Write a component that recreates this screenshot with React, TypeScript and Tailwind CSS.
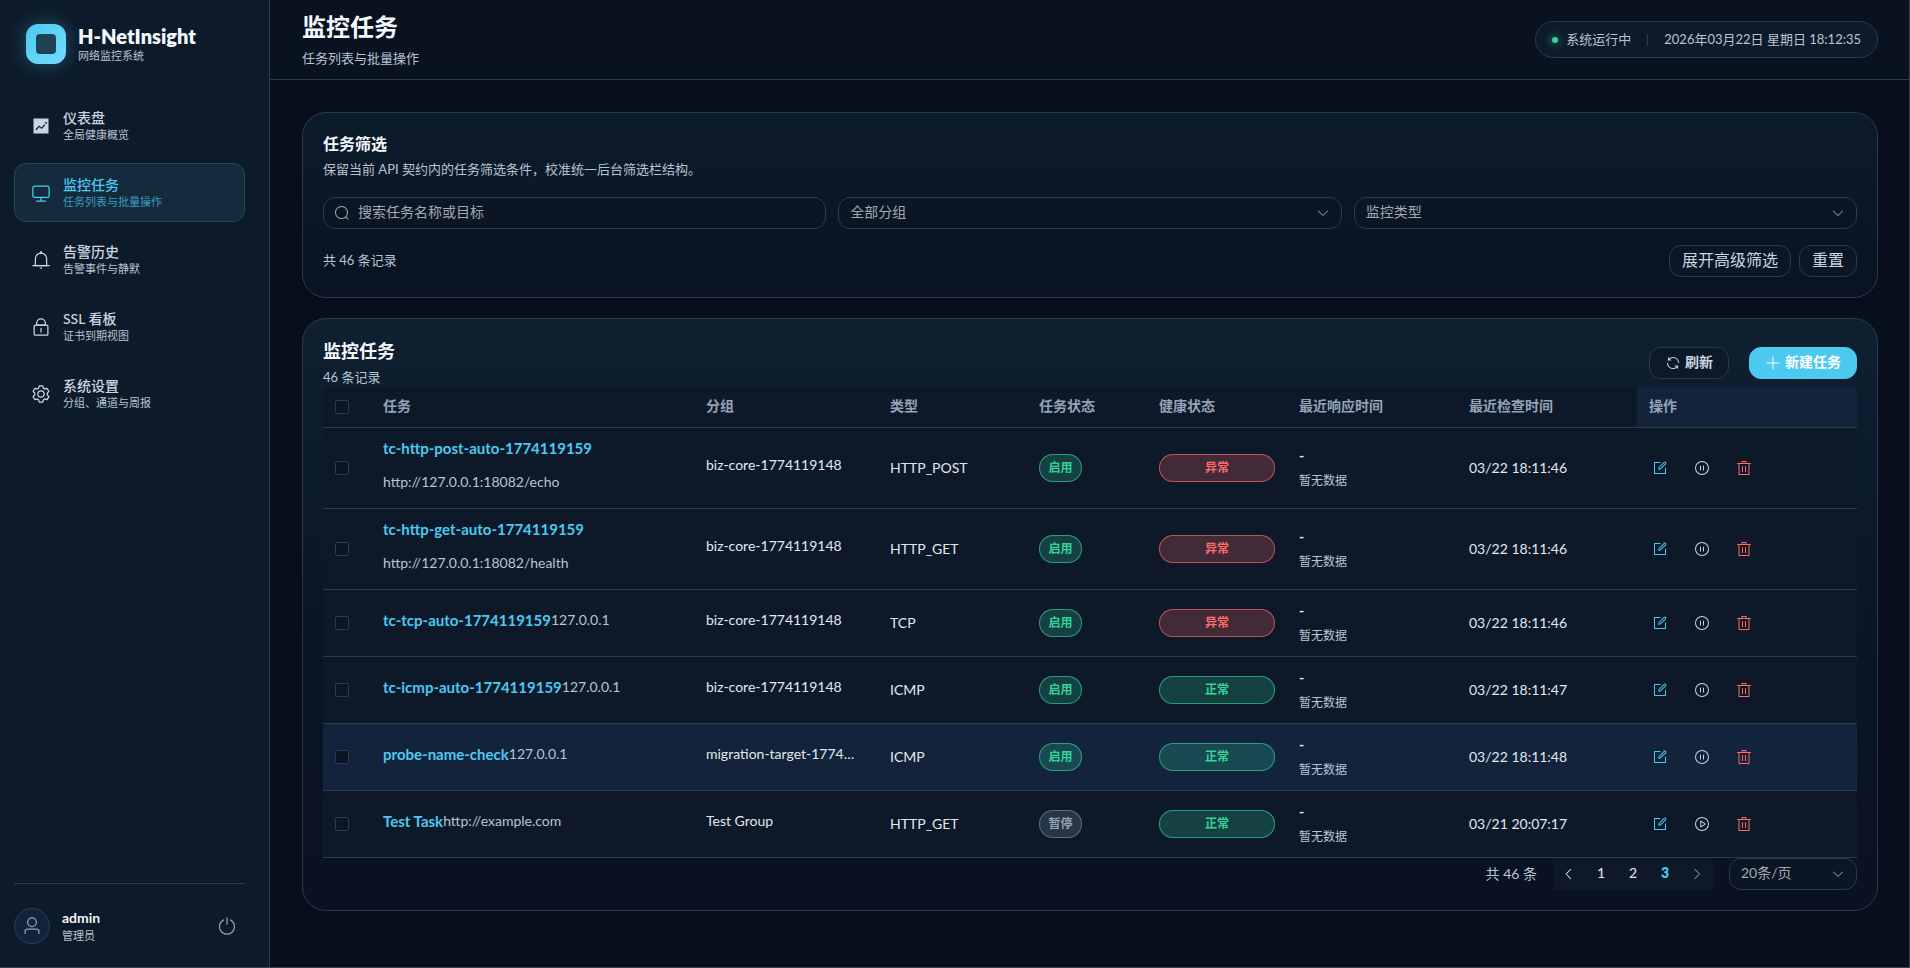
import { useState } from "react";
import type { ReactNode } from "react";
import clsx from "clsx";

const icons = {
  trend: [
    "M128 896V128h768v768zm291.712-327.296 128 102.4 180.16-201.792-47.744-42.624-139.84 156.608-128-102.4-180.16 201.792 47.744 42.624zM816 352a48 48 0 1 0-96 0 48 48 0 0 0 96 0",
  ],
  monitor: [
    "M544 768v128h192a32 32 0 1 1 0 64H288a32 32 0 1 1 0-64h192V768H192A128 128 0 0 1 64 640V256a128 128 0 0 1 128-128h640a128 128 0 0 1 128 128v384a128 128 0 0 1-128 128zM192 192a64 64 0 0 0-64 64v384a64 64 0 0 0 64 64h640a64 64 0 0 0 64-64V256a64 64 0 0 0-64-64z",
  ],
  bell: [
    "M512 64a64 64 0 0 1 64 64v64H448v-64a64 64 0 0 1 64-64",
    "M256 768h512V448a256 256 0 1 0-512 0zm256-640a320 320 0 0 1 320 320v384H192V448a320 320 0 0 1 320-320",
    "M96 768h832q32 0 32 32t-32 32H96q-32 0-32-32t32-32m352 128h128a64 64 0 0 1-128 0",
  ],
  lock: [
    "M224 448a32 32 0 0 0-32 32v384a32 32 0 0 0 32 32h576a32 32 0 0 0 32-32V480a32 32 0 0 0-32-32zm0-64h576a96 96 0 0 1 96 96v384a96 96 0 0 1-96 96H224a96 96 0 0 1-96-96V480a96 96 0 0 1 96-96",
    "M512 544a32 32 0 0 1 32 32v192a32 32 0 1 1-64 0V576a32 32 0 0 1 32-32m192-160v-64a192 192 0 1 0-384 0v64zM512 64a256 256 0 0 1 256 256v128H256V320A256 256 0 0 1 512 64",
  ],
  setting: [
    "M600.704 64a32 32 0 0 1 30.464 22.208l35.2 109.376c14.784 7.232 28.928 15.36 42.432 24.512l112.384-24.192a32 32 0 0 1 34.432 15.36L944.32 364.8a32 32 0 0 1-4.032 37.504l-77.12 85.12a357.12 357.12 0 0 1 0 49.024l77.12 85.248a32 32 0 0 1 4.032 37.504l-88.704 153.6a32 32 0 0 1-34.432 15.296L708.8 803.904c-13.44 9.088-27.648 17.28-42.368 24.512l-35.264 109.376A32 32 0 0 1 600.704 960H423.296a32 32 0 0 1-30.464-22.208L357.696 828.48a351.616 351.616 0 0 1-42.56-24.64l-112.32 24.256a32 32 0 0 1-34.432-15.36L79.68 659.2a32 32 0 0 1 4.032-37.504l77.12-85.248a357.12 357.12 0 0 1 0-48.896l-77.12-85.248A32 32 0 0 1 79.68 364.8l88.704-153.6a32 32 0 0 1 34.432-15.296l112.32 24.256c13.568-9.152 27.776-17.408 42.56-24.64l35.2-109.312A32 32 0 0 1 423.232 64H600.64zm-23.424 64H446.72l-36.352 113.088-24.512 11.968a294.113 294.113 0 0 0-34.816 20.096l-22.656 15.36-116.224-25.088-65.28 113.152 79.68 88.192-1.92 27.136a293.12 293.12 0 0 0 0 40.192l1.92 27.136-79.808 88.192 65.344 113.152 116.224-25.024 22.656 15.296a294.113 294.113 0 0 0 34.816 20.096l24.512 11.968L446.72 896h130.688l36.48-113.152 24.448-11.904a288.282 288.282 0 0 0 34.752-20.096l22.592-15.296 116.288 25.024 65.28-113.152-79.744-88.192 1.92-27.136a293.12 293.12 0 0 0 0-40.256l-1.92-27.136 79.808-88.128-65.344-113.152-116.288 24.96-22.592-15.232a287.616 287.616 0 0 0-34.752-20.096l-24.448-11.904L577.344 128zM512 320a192 192 0 1 1 0 384 192 192 0 0 1 0-384m0 64a128 128 0 1 0 0 256 128 128 0 0 0 0-256",
  ],
  user: [
    "M512 512a192 192 0 1 0 0-384 192 192 0 0 0 0 384m0 64a256 256 0 1 1 0-512 256 256 0 0 1 0 512m320 320v-96a96 96 0 0 0-96-96H288a96 96 0 0 0-96 96v96a32 32 0 1 1-64 0v-96a160 160 0 0 1 160-160h448a160 160 0 0 1 160 160v96a32 32 0 1 1-64 0",
  ],
  power: [
    "M352 159.872V230.4a352 352 0 1 0 320 0v-70.528A416.128 416.128 0 0 1 512 960a416 416 0 0 1-160-800.128z",
    "M512 64q32 0 32 32v320q0 32-32 32t-32-32V96q0-32 32-32",
  ],
  search: [
    "m795.904 750.72 124.992 124.928a32 32 0 0 1-45.248 45.248L750.656 795.904a416 416 0 1 1 45.248-45.248zM480 832a352 352 0 1 0 0-704 352 352 0 0 0 0 704",
  ],
  down: [
    "M831.872 340.864 512 652.672 192.128 340.864a30.592 30.592 0 0 0-42.752 0 29.12 29.12 0 0 0 0 41.6L489.664 714.24a32 32 0 0 0 44.672 0l340.288-331.712a29.12 29.12 0 0 0 0-41.728 30.592 30.592 0 0 0-42.752 0z",
  ],
  left: [
    "M609.408 149.376 277.76 489.6a32 32 0 0 0 0 44.672l331.648 340.352a29.12 29.12 0 0 0 41.728 0 30.592 30.592 0 0 0 0-42.752L339.264 511.936l311.872-319.872a30.592 30.592 0 0 0 0-42.688 29.12 29.12 0 0 0-41.728 0z",
  ],
  right: [
    "M340.864 149.312a30.592 30.592 0 0 0 0 42.752L652.736 512 340.864 831.872a30.592 30.592 0 0 0 0 42.752 29.12 29.12 0 0 0 41.728 0L714.24 534.336a32 32 0 0 0 0-44.672L382.592 149.376a29.12 29.12 0 0 0-41.728 0z",
  ],
  refresh: [
    "M771.776 794.88A384 384 0 0 1 128 512h64a320 320 0 0 0 555.712 216.448H654.72a32 32 0 1 1 0-64h149.056a32 32 0 0 1 32 32v148.928a32 32 0 1 1-64 0v-50.56zM276.288 295.616h92.992a32 32 0 0 1 0 64H220.16a32 32 0 0 1-32-32V178.56a32 32 0 0 1 64 0v50.56A384 384 0 0 1 896.128 512h-64a320 320 0 0 0-555.776-216.384z",
  ],
  plus: [
    "M480 480V128a32 32 0 0 1 64 0v352h352a32 32 0 1 1 0 64H544v352a32 32 0 1 1-64 0V544H128a32 32 0 0 1 0-64z",
  ],
  edit: [
    "M832 512a32 32 0 1 1 64 0v352a32 32 0 0 1-32 32H160a32 32 0 0 1-32-32V160a32 32 0 0 1 32-32h352a32 32 0 0 1 0 64H192v640h640z",
    "m469.952 554.24 52.8-7.552L847.104 222.4a32 32 0 1 0-45.248-45.248L477.44 501.44l-7.552 52.8zm422.4-422.4a96 96 0 0 1 0 135.808l-331.84 331.84a32 32 0 0 1-18.112 9.088L436.8 623.68a32 32 0 0 1-36.224-36.224l15.104-105.6a32 32 0 0 1 9.024-18.112l331.904-331.84a96 96 0 0 1 135.744 0z",
  ],
  pause: [
    "M512 64a448 448 0 1 1 0 896 448 448 0 0 1 0-896m0 832a384 384 0 0 0 0-768 384 384 0 0 0 0 768m-96-544q32 0 32 32v256q0 32-32 32t-32-32V384q0-32 32-32m192 0q32 0 32 32v256q0 32-32 32t-32-32V384q0-32 32-32",
  ],
  play: [
    "M512 64a448 448 0 1 1 0 896 448 448 0 0 1 0-896m0 832a384 384 0 0 0 0-768 384 384 0 0 0 0 768m-48-247.616L668.608 512 464 375.616zm10.624-342.656 249.472 166.336a48 48 0 0 1 0 79.872L474.624 718.272A48 48 0 0 1 400 678.336V345.6a48 48 0 0 1 74.624-39.936z",
  ],
  trash: [
    "M160 256H96a32 32 0 0 1 0-64h256V95.936a32 32 0 0 1 32-32h256a32 32 0 0 1 32 32V192h256a32 32 0 1 1 0 64h-64v672a32 32 0 0 1-32 32H192a32 32 0 0 1-32-32zm448-64v-64H416v64zM224 896h576V256H224zm192-128a32 32 0 0 1-32-32V416a32 32 0 0 1 64 0v320a32 32 0 0 1-32 32m192 0a32 32 0 0 1-32-32V416a32 32 0 0 1 64 0v320a32 32 0 0 1-32 32",
  ],
};

type IconName = keyof typeof icons;

function Icon({ name, className }: { name: IconName; className?: string }) {
  return (
    <svg
      xmlns="http://www.w3.org/2000/svg"
      viewBox="0 0 1024 1024"
      fill="currentColor"
      className={clsx("shrink-0", className)}
      aria-hidden="true"
    >
      {icons[name].map((d) => (
        <path key={d} d={d} />
      ))}
    </svg>
  );
}

const navItems: { icon: IconName; label: string; desc: string; href: string }[] = [
  { icon: "trend", label: "仪表盘", desc: "全局健康概览", href: "#dashboard" },
  { icon: "monitor", label: "监控任务", desc: "任务列表与批量操作", href: "#tasks" },
  { icon: "bell", label: "告警历史", desc: "告警事件与静默", href: "#alerts" },
  { icon: "lock", label: "SSL 看板", desc: "证书到期视图", href: "#ssl" },
  { icon: "setting", label: "系统设置", desc: "分组、通道与周报", href: "#settings" },
];

const tasks = [
  {
    name: "tc-http-post-auto-1774119159",
    target: "http://127.0.0.1:18082/echo",
    group: "biz-core-1774119148",
    type: "HTTP_POST",
    enabled: true,
    healthy: false,
    checkedAt: "03/22 18:11:46",
  },
  {
    name: "tc-http-get-auto-1774119159",
    target: "http://127.0.0.1:18082/health",
    group: "biz-core-1774119148",
    type: "HTTP_GET",
    enabled: true,
    healthy: false,
    checkedAt: "03/22 18:11:46",
  },
  {
    name: "tc-tcp-auto-1774119159",
    target: "127.0.0.1",
    group: "biz-core-1774119148",
    type: "TCP",
    enabled: true,
    healthy: false,
    checkedAt: "03/22 18:11:46",
  },
  {
    name: "tc-icmp-auto-1774119159",
    target: "127.0.0.1",
    group: "biz-core-1774119148",
    type: "ICMP",
    enabled: true,
    healthy: true,
    checkedAt: "03/22 18:11:47",
  },
  {
    name: "probe-name-check",
    target: "127.0.0.1",
    group: "migration-target-1774…",
    type: "ICMP",
    enabled: true,
    healthy: true,
    checkedAt: "03/22 18:11:48",
    highlighted: true,
  },
  {
    name: "Test Task",
    target: "http://example.com",
    group: "Test Group",
    type: "HTTP_GET",
    enabled: false,
    healthy: true,
    checkedAt: "03/21 20:07:17",
  },
];

const columns = ["任务", "分组", "类型", "任务状态", "健康状态", "最近响应时间", "最近检查时间"];

function Sidebar() {
  return (
    <aside className="flex w-[270px] shrink-0 flex-col border-r border-[#2a3a4f] bg-[#0d1a29] pr-6 pl-3.5">
      <div className="flex items-center gap-3 px-3 pt-6">
        <div className="flex size-10 items-center justify-center rounded-xl bg-linear-to-br from-[#4cc9f0] to-[#72dcff] shadow-[0_0_20px_rgba(76,201,240,0.35)]">
          <div className="size-5 rounded bg-[#1d4355]" />
        </div>
        <div>
          <div className="text-[20px] leading-6 font-extrabold text-[#f4f8ff]">H-NetInsight</div>
          <div className="text-[11px] leading-4 text-[#b8c4d4]">网络监控系统</div>
        </div>
      </div>

      <nav className="mt-8 flex flex-col gap-2">
        {navItems.map((item) => {
          const active = item.label === "监控任务";
          return (
            <a
              key={item.href}
              href={item.href}
              aria-current={active ? "page" : undefined}
              className={clsx(
                "flex h-[59px] items-center gap-3 rounded-xl border px-4",
                active
                  ? "border-[#1f4a5e] bg-[#142a3d] text-[#4cc9f0]"
                  : "border-transparent text-[#cbd5e1]",
              )}
            >
              <Icon name={item.icon} className="size-5" />
              <span className="flex flex-col">
                <span className="text-sm leading-[18px] font-medium">{item.label}</span>
                <span className={clsx("text-[11px] leading-4", active ? "text-[#3c9dbd]" : "text-[#b8c4d4]")}>
                  {item.desc}
                </span>
              </span>
            </a>
          );
        })}
      </nav>

      <div className="mt-auto flex items-center border-t border-[#2a3a4f] py-6">
        <div className="flex size-9 items-center justify-center rounded-full border border-[#2a3f5a] bg-[#12233b] text-[#94a3b8]">
          <Icon name="user" className="size-5" />
        </div>
        <div className="ml-3">
          <div className="text-sm leading-5 font-bold text-[#f1f5f9]">admin</div>
          <div className="text-[11px] leading-4 text-[#b8c4d4]">管理员</div>
        </div>
        <button type="button" aria-label="退出登录" className="mr-2 ml-auto text-[#94a3b8]">
          <Icon name="power" className="size-5" />
        </button>
      </div>
    </aside>
  );
}

function Header() {
  return (
    <header className="flex h-20 items-center justify-between border-b border-[#2a3a4f] bg-[#09121f] px-8">
      <div>
        <h1 className="text-2xl leading-[30px] font-bold text-[#f4f8ff]">监控任务</h1>
        <p className="mt-1.5 text-[13px] leading-5 text-[#b8c4d4]">任务列表与批量操作</p>
      </div>
      <div className="flex h-[37px] items-center rounded-full border border-[#2a3a4f] bg-[#0d1a29] px-4 text-[13px] text-[#b8c4d4]">
        <span className="size-1.5 rounded-full bg-[#34d399] shadow-[0_0_8px_#34d399]" />
        <span className="ml-2">系统运行中</span>
        <span className="mx-4 h-3 w-px bg-[#2a3a4f]" />
        <time>2026年03月22日 星期日 18:12:35</time>
      </div>
    </header>
  );
}

function SelectBox({ label, className, children }: { label: string; className?: string; children: ReactNode }) {
  return (
    <div className={clsx("relative", className)}>
      <select
        aria-label={label}
        className="h-8 w-full appearance-none rounded-xl border border-[#2a3a4f] bg-[#0a1624] px-[11px] pb-0.5 text-sm text-[#a3a9b3]"
      >
        {children}
      </select>
      <Icon name="down" className="pointer-events-none absolute top-[9px] right-3 size-3.5 text-[#9ca3af]" />
    </div>
  );
}

function FilterCard() {
  return (
    <section className="rounded-3xl border border-[#263a50] bg-linear-to-b from-[#0c1b2a] to-[#091322] p-5">
      <h2 className="text-base leading-[22px] font-bold text-[#f4f8ff]">任务筛选</h2>
      <p className="mt-1 text-[13px] leading-5 text-[#b8c4d4]">
        保留当前 API 契约内的任务筛选条件，校准统一后台筛选栏结构。
      </p>
      <div className="mt-[18px] grid grid-cols-3 gap-3">
        <label className="flex h-8 items-center gap-2 rounded-xl border border-[#2a3a4f] bg-[#0a1624] px-2.5 text-[#a3a9b3]">
          <Icon name="search" className="size-4" />
          <input
            type="text"
            aria-label="搜索任务名称或目标"
            placeholder="搜索任务名称或目标"
            className="w-full bg-transparent pb-0.5 text-sm outline-none placeholder:text-[#a3a9b3]"
          />
        </label>
        <SelectBox label="分组">
          <option>全部分组</option>
        </SelectBox>
        <SelectBox label="监控类型">
          <option>监控类型</option>
        </SelectBox>
      </div>
      <div className="mt-4 flex items-center justify-between">
        <span className="text-[13px] text-[#b8c4d4]">共 46 条记录</span>
        <div className="flex gap-2">
          {["展开高级筛选", "重置"].map((label) => (
            <button
              key={label}
              type="button"
              className="h-8 rounded-xl border border-[#2a3a4f] bg-[#0b1726] px-3 pb-0.5 text-base leading-6 text-[#cbd5e1]"
            >
              {label}
            </button>
          ))}
        </div>
      </div>
    </section>
  );
}

function Checkbox({ label }: { label: string }) {
  return (
    <input
      type="checkbox"
      aria-label={label}
      className="block size-3.5 appearance-none rounded-xs border border-[#2a3a4f] bg-[#0a1624] checked:bg-[#4cc9f0]"
    />
  );
}

function TaskTable() {
  return (
    <table className="w-full table-fixed border-collapse bg-[#0d1929] text-left text-sm text-[#e2e8f0]">
      <colgroup>
        <col className="w-12" />
        <col />
        <col className="w-[184px]" />
        <col className="w-[149px]" />
        <col className="w-[120px]" />
        <col className="w-[140px]" />
        <col className="w-[170px]" />
        <col className="w-[180px]" />
        <col className="w-[220px]" />
      </colgroup>
      <thead>
        <tr className="h-10 border-b border-[#2a3a4f] text-[#94a3b8]">
          <th className="px-3">
            <Checkbox label="全选" />
          </th>
          {columns.map((name) => (
            <th key={name} className="px-3 pb-0.5 font-bold">
              {name}
            </th>
          ))}
          <th className="bg-[#12233b] px-3 pb-0.5 font-bold">操作</th>
        </tr>
      </thead>
      <tbody>
        {tasks.map((task) => (
          <tr
            key={task.name}
            className={clsx("border-b border-[#2a3a4f]", task.highlighted && "bg-[#12233b]")}
          >
            <td className="px-3">
              <Checkbox label={task.name} />
            </td>
            <td className="px-3 py-2">
              <div className="flex flex-wrap gap-y-2.5 pb-1.5 leading-6">
                <a href="#task" className="text-[15px] font-bold text-[#4cc9f0]">
                  {task.name}
                </a>
                <span className="text-[#b8c4d4]">{task.target}</span>
              </div>
            </td>
            <td className="px-3 pb-1.5">
              <div className="truncate">{task.group}</div>
            </td>
            <td className="px-3">{task.type}</td>
            <td className="px-3">
              <span
                className={clsx(
                  "inline-flex h-7 w-[43px] items-center justify-center rounded-full border align-middle text-xs font-bold",
                  task.enabled
                    ? "border-[#34d399]/65 bg-[#34d399]/22 text-[#34d399]"
                    : "border-[#94a3b8]/50 bg-[#94a3b8]/20 text-[#94a3b8]",
                )}
              >
                {task.enabled ? "启用" : "暂停"}
              </span>
            </td>
            <td className="px-3">
              <span
                className={clsx(
                  "flex h-7 items-center justify-center rounded-full border text-xs font-bold",
                  task.healthy
                    ? "border-[#34d399]/65 bg-[#34d399]/22 text-[#34d399]"
                    : "border-[#ff6b6b]/65 bg-[#ff6b6b]/22 text-[#ff6b6b]",
                )}
              >
                {task.healthy ? "正常" : "异常"}
              </span>
            </td>
            <td className="px-3 py-2 leading-[25px]">
              <div className="font-bold">-</div>
              <div className="text-xs leading-[25px] text-[#b8c4d4]">暂无数据</div>
            </td>
            <td className="px-3">{task.checkedAt}</td>
            <td className="px-3">
              <div className="flex gap-5">
                <button type="button" aria-label="编辑" className="flex w-[22px] justify-center text-[#4cc9f0]">
                  <Icon name="edit" className="size-4" />
                </button>
                <button
                  type="button"
                  aria-label={task.enabled ? "暂停" : "启动"}
                  className="flex w-[22px] justify-center text-[#cbd5e1]"
                >
                  <Icon name={task.enabled ? "pause" : "play"} className="size-4" />
                </button>
                <button type="button" aria-label="删除" className="flex w-[22px] justify-center text-[#ff6b6b]">
                  <Icon name="trash" className="size-4" />
                </button>
              </div>
            </td>
          </tr>
        ))}
      </tbody>
    </table>
  );
}

function Pagination() {
  const [page, setPage] = useState(3);

  return (
    <div className="flex items-center justify-end gap-4 text-sm text-[#b8c4d4]">
      <span>共 46 条</span>
      <div className="flex bg-[#0d1929]">
        <button
          type="button"
          aria-label="上一页"
          className="flex size-8 items-center justify-center text-[#e2e8f0]"
          onClick={() => setPage((prev) => Math.max(1, prev - 1))}
        >
          <Icon name="left" className="size-3.5" />
        </button>
        {[1, 2, 3].map((n) => (
          <button
            key={n}
            type="button"
            className={clsx("size-8 pb-0.5", n === page ? "font-extrabold text-[#4cc9f0]" : "text-[#e2e8f0]")}
            onClick={() => setPage(n)}
          >
            {n}
          </button>
        ))}
        <button
          type="button"
          aria-label="下一页"
          className="flex size-8 items-center justify-center text-[#8d939e]"
          onClick={() => setPage((prev) => Math.min(3, prev + 1))}
        >
          <Icon name="right" className="size-3.5" />
        </button>
      </div>
      <SelectBox label="每页条数" className="w-32">
        <option>20条/页</option>
      </SelectBox>
    </div>
  );
}

function TaskCard() {
  return (
    <section className="rounded-3xl border border-[#263a50] bg-linear-to-b from-[#0f2031] via-[#091625] to-[#0a1222] p-5">
      <div className="flex items-center justify-between">
        <div>
          <h2 className="text-lg leading-6 font-bold text-[#f4f8ff]">监控任务</h2>
          <p className="pt-1 text-[13px] leading-5 text-[#b8c4d4]">46 条记录</p>
        </div>
        <div className="flex gap-5 text-sm font-bold">
          <button
            type="button"
            className="flex h-8 items-center gap-1 rounded-xl border border-[#2a3a4f] bg-[#0d1929] px-[15px] text-[#cbd5e1]"
          >
            <Icon name="refresh" className="size-4" />
            <span className="pb-0.5">刷新</span>
          </button>
          <button
            type="button"
            className="flex h-8 items-center gap-1 rounded-xl border border-[#4cc9f0] bg-[#4cc9f0] px-[15px] text-white"
          >
            <Icon name="plus" className="size-4" />
            <span className="pb-0.5">新建任务</span>
          </button>
        </div>
      </div>
      <TaskTable />
      <Pagination />
    </section>
  );
}

export default function App() {
  return (
    <div className="relative flex min-h-screen bg-[#090e1c] font-['Lato','Noto_Sans_CJK_SC',sans-serif] after:pointer-events-none after:absolute after:inset-0 after:border-r after:border-b after:border-[#3a4250]">
      <Sidebar />
      <div className="flex min-w-0 flex-1 flex-col">
        <Header />
        <main className="flex flex-col gap-5 p-8">
          <FilterCard />
          <TaskCard />
        </main>
      </div>
    </div>
  );
}
